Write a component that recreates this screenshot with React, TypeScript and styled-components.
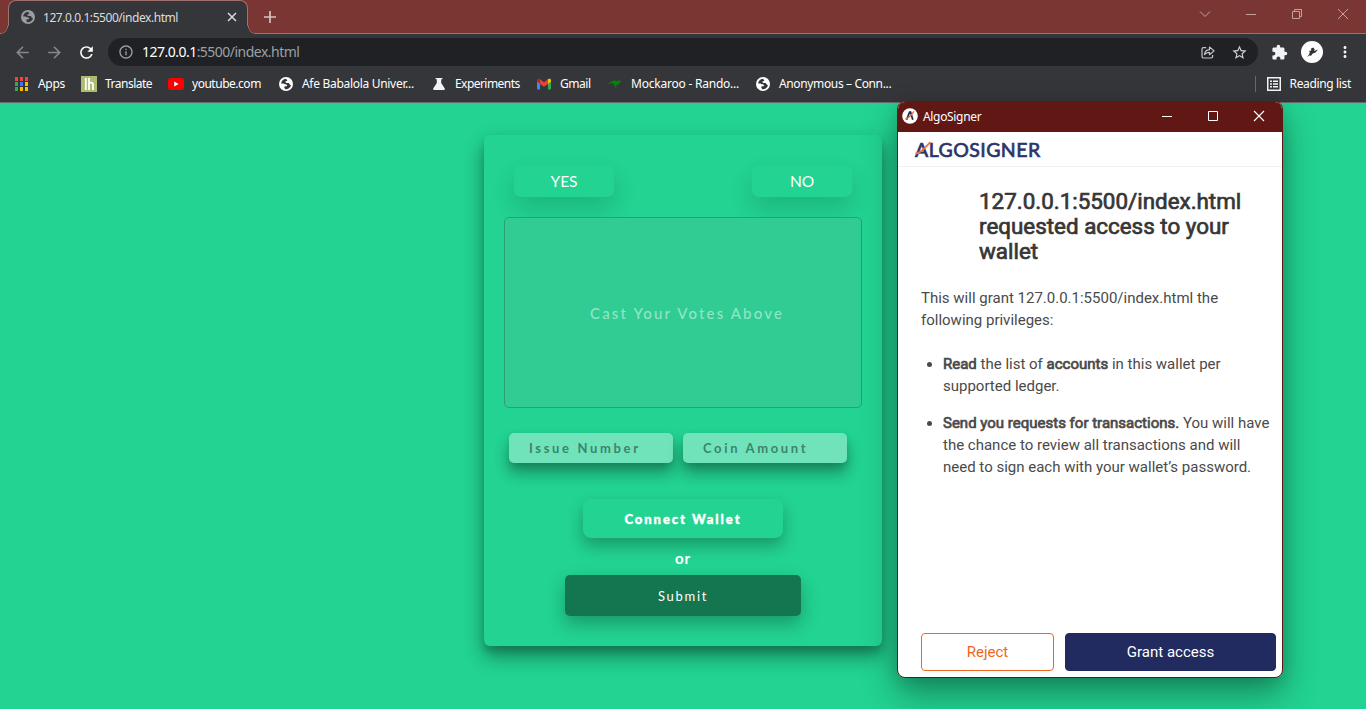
import React from "react";
import styled, { createGlobalStyle } from "styled-components";
import {
  MdArrowBack,
  MdArrowForward,
  MdRefresh,
  MdInfoOutline,
  MdStarBorder,
  MdExtension,
  MdMoreVert,
} from "react-icons/md";

const GlobalStyle = createGlobalStyle`
  *, *::before, *::after { box-sizing: border-box; }
  html, body { margin: 0; padding: 0; overflow: hidden; }
  body { background: #22d391; font-family: "Noto Sans", "Open Sans", sans-serif; }
  svg { display: block; flex: none; }
`;

const Desktop = styled.div`
  position: relative;
  width: 1366px;
  height: 709px;
  overflow: hidden;
  display: flex;
  flex-direction: column;
`;

/* ---------- Browser chrome ---------- */

const TabStrip = styled.div`
  height: 34px;
  flex: none;
  display: flex;
  align-items: flex-start;
  padding-left: 8px;
  background: #793632;
  box-shadow: inset 0 -1px 0 #9f706d;
`;

const Tab = styled.div`
  position: relative;
  width: 240px;
  height: 34px;
  display: flex;
  align-items: center;
  padding: 0 9px 1px 12px;
  background: #35363a;
  border: 1px solid #9f706d;
  border-bottom: 0;
  border-radius: 8px 8px 0 0;
  &::before,
  &::after {
    content: "";
    position: absolute;
    bottom: 0;
    width: 9px;
    height: 8px;
  }
  &::before {
    left: -9px;
    background: radial-gradient(circle at 0 0, #793632 7px, #9f706d 7.5px, #35363a 8.3px);
  }
  &::after {
    right: -9px;
    background: radial-gradient(circle at 100% 0, #793632 7px, #9f706d 7.5px, #35363a 8.3px);
  }
`;

const TabTitle = styled.span`
  flex: 1;
  margin: 0 0 0 8px;
  font-size: 12px;
  letter-spacing: -0.44px;
  color: #dcdcdd;
  white-space: nowrap;
`;

const NewTab = styled.div`
  margin: 11px 0 0 16px;
`;

const Caption = styled.div`
  margin: 7px 16px 0 auto;
  display: flex;
  gap: 32px;
`;

const Toolbar = styled.div`
  height: 35px;
  flex: none;
  display: flex;
  align-items: center;
  padding: 1px 12px 0 13px;
  background: #35363a;
`;

const NavButtons = styled.div`
  display: flex;
  align-items: center;
  gap: 13px;
  width: 95px;
`;

const Omnibox = styled.div`
  width: 1150px;
  height: 28px;
  display: flex;
  align-items: center;
  padding: 0 10px;
  border-radius: 14px;
  background: #202124;
`;

const Url = styled.span`
  flex: 1;
  margin: -1px 0 0 8px;
  font-size: 14px;
  letter-spacing: -0.52px;
  color: #9aa0a6;
  b { font-weight: 400; color: #fff; }
`;

const OmniIcons = styled.div`
  display: flex;
  align-items: center;
  gap: 16px;
`;

const ToolbarEnd = styled.div`
  flex: 1;
  display: flex;
  align-items: center;
  justify-content: space-between;
  padding-left: 13px;
`;

const BookmarkBar = styled.div`
  height: 34px;
  flex: none;
  display: flex;
  align-items: center;
  padding: 0 14px 4px;
  background: #35363a;
  border-bottom: 1px solid #68696c;
`;

const Bookmark = styled.div<{ $w: number; $gap?: number }>`
  width: ${(p) => p.$w}px;
  display: flex;
  align-items: center;
  gap: ${(p) => p.$gap ?? 8}px;
  white-space: nowrap;
`;

const BookmarkText = styled.span<{ $ls?: number }>`
  font-size: 12px;
  line-height: 18px;
  letter-spacing: ${(p) => p.$ls ?? -0.3}px;
  color: #fff;
`;

const ReadingList = styled.div`
  margin-left: auto;
  height: 16px;
  display: flex;
  align-items: center;
  gap: 9px;
  padding: 0 1px 0 11px;
  border-left: 1px solid #68696d;
  white-space: nowrap;
`;

/* ---------- Voting page ---------- */

const Page = styled.main`
  flex: 1;
  padding: 32px 0 0 484px;
  background: #22d391;
  font-family: Lato, "Liberation Sans", sans-serif;
`;

const Card = styled.section`
  width: 398px;
  height: 511px;
  display: flex;
  flex-direction: column;
  align-items: center;
  padding: 30px 20px;
  border-radius: 6px;
  background: #22d391;
  box-shadow: 0 10px 20px rgba(0, 0, 0, 0.4), 0 6px 6px rgba(0, 0, 0, 0.12);
`;

const VoteRow = styled.div`
  width: 338px;
  display: flex;
  justify-content: space-between;
`;

const VoteButton = styled.button`
  width: 100px;
  height: 32px;
  padding: 0;
  border: 0;
  border-radius: 7px;
  background: #22d391;
  box-shadow: 0 12px 24px rgba(0, 0, 0, 0.14);
  color: #fff;
  font: 400 15.5px/30px Lato, sans-serif;
`;

const Board = styled.div`
  width: 358px;
  height: 191px;
  margin-top: 20px;
  display: flex;
  align-items: center;
  justify-content: center;
  padding-left: 8px;
  border: 1px solid #2a9f73;
  border-radius: 5px;
  background: #31cc94;
  color: #8fe6c4;
  font-size: 15px;
  font-weight: 500;
  letter-spacing: 2.15px;
`;

const Fields = styled.div`
  width: 348px;
  margin-top: 25px;
  display: flex;
  gap: 10px;
`;

const Field = styled.div`
  width: 164px;
  height: 30px;
  padding-left: 20px;
  border-radius: 5px;
  background: #71e3ba;
  box-shadow: 0 10px 15px rgba(0, 0, 0, 0.32), 0 4px 6px rgba(0, 0, 0, 0.1);
  color: #3a856b;
  font-size: 13px;
  font-weight: 700;
  line-height: 31px;
  letter-spacing: 2.65px;
  white-space: nowrap;
`;

const ConnectButton = styled.button`
  width: 200px;
  height: 39px;
  margin-top: 36px;
  padding: 0;
  border: 0;
  border-radius: 8px;
  background: #22d391;
  box-shadow: 0 8px 16px rgba(0, 0, 0, 0.27);
  color: #fff;
  font: 900 13px Lato, sans-serif;
  letter-spacing: 1.95px;
  -webkit-text-stroke: 0.4px #fff;
`;

const Or = styled.div`
  height: 37px;
  line-height: 41px;
  color: #fff;
  font-size: 15px;
  font-weight: 700;
  letter-spacing: 1px;
`;

const SubmitButton = styled.button`
  width: 236px;
  height: 41px;
  padding: 0;
  border: 0;
  border-radius: 5px;
  background: #147551;
  box-shadow: 0 8px 18px rgba(0, 0, 0, 0.27);
  color: #fff;
  font: 400 13px Lato, sans-serif;
  letter-spacing: 1.7px;
`;

/* ---------- Extension window ---------- */

const Window = styled.div`
  position: absolute;
  left: 897px;
  top: 101px;
  width: 386px;
  height: 577px;
  display: flex;
  flex-direction: column;
  overflow: hidden;
  border: 1px solid #5c1816;
  border-radius: 8px;
  background: #fff;
  font-family: Roboto, sans-serif;
`;

const WindowShadow = styled.div`
  position: absolute;
  left: 897px;
  top: 103px;
  width: 386px;
  height: 575px;
  border-radius: 8px;
  box-shadow: 0 16px 34px rgba(0, 0, 0, 0.35), 0 2px 16px rgba(0, 0, 0, 0.12);
`;

const TitleBar = styled.div`
  height: 30px;
  flex: none;
  display: flex;
  align-items: center;
  padding: 0 17px 2px 4px;
  background: #611815;
  color: #fff;
  font: 12px "Noto Sans", sans-serif;
  letter-spacing: -0.33px;
`;

const TitleText = styled.span`
  flex: 1;
  margin: 1px 0 0 5px;
`;

const WindowControls = styled.div`
  display: flex;
  gap: 34px;
`;

const Brand = styled.div`
  height: 35px;
  flex: none;
  padding-left: 17px;
  border-bottom: 1px solid #edf4f4;
`;

const BrandMark = styled.div`
  position: relative;
  width: 128px;
  color: #2c3468;
  font: 400 19.5px/36px Lato, sans-serif;
  letter-spacing: 0.45px;
  -webkit-text-stroke: 0.7px #2c3468;
  white-space: nowrap;
  svg { position: absolute; left: 0; top: 9px; }
`;

const Heading = styled.h1`
  margin: 22px 0 0 81px;
  width: 280px;
  color: #363636;
  font-size: 22.4px;
  font-weight: 400;
  line-height: 25px;
  -webkit-text-stroke: 0.7px #363636;
`;

const Prose = styled.div`
  margin: 23px 0 0 23px;
  width: 352px;
  color: #4a4a4a;
  font-size: 15px;
  line-height: 22px;
  p { margin: 0; }
  ul { margin: 22px 0 0; padding-left: 22px; }
  li + li { margin-top: 15px; }
  strong { font-weight: 400; -webkit-text-stroke: 0.7px #4a4a4a; }
`;

const Actions = styled.div`
  margin-top: auto;
  display: flex;
  gap: 11px;
  padding: 0 6px 6px 23px;
`;

const Action = styled.button<{ $primary?: boolean }>`
  width: ${(p) => (p.$primary ? 211 : 133)}px;
  height: 38px;
  padding: 0;
  border: 1px solid ${(p) => (p.$primary ? "#222b60" : "#f16522")};
  border-radius: 4px;
  background: ${(p) => (p.$primary ? "#222b60" : "#fff")};
  color: ${(p) => (p.$primary ? "#fff" : "#f16522")};
  font: 400 15px Roboto, sans-serif;
`;

/* ---------- Drawings ---------- */

const Globe = ({ color, ink }: { color: string; ink: string }) => (
  <svg width="14" height="14" viewBox="0 0 14 14">
    <circle cx="7" cy="7" r="7" fill={color} />
    <path
      d="M7.2 1.8C5.6 1.9 3.4 3 2.6 4.8L2 6.6H4.6L5.6 7.2H7.2L8.2 8.4 7.6 9.2H5.8L5.2 10.8 6.4 12.3C8.6 12.6 11.2 11 12 8.6L10.8 7.4 9.8 6H7.4L6.4 5.2 6.6 4.2 8.4 4Z"
      fill={ink}
    />
  </svg>
);

const appColors = ["#f0453c", "#f0453c", "#f0453c", "#34a853", "#2f7df6", "#fbbc05", "#34a853", "#fbbc05", "#fbbc05"];

const AppsGrid = () => (
  <svg width="14" height="14" viewBox="0 0 14 14" shapeRendering="crispEdges">
    {appColors.map((c, i) => (
      <rect key={i} x={1 + (i % 3) * 5} y={Math.floor(i / 3) * 5} width="3" height="4" fill={c} />
    ))}
  </svg>
);

const TranslateIcon = () => (
  <svg width="16" height="16" viewBox="0 0 16 16">
    <rect width="16" height="16" fill="#acbd6f" />
    <path d="M4.8 2v12M8 2v12M8 7.8c1-1.8 4-1.6 4 .4V14" stroke="#fff" strokeWidth="1.8" fill="none" />
  </svg>
);

const YoutubeIcon = () => (
  <svg width="16" height="12" viewBox="0 0 16 12">
    <rect width="16" height="12" rx="3" fill="#f00" />
    <path d="M6.2 3.6v4.8L10.6 6z" fill="#fff" />
  </svg>
);

const FlaskIcon = () => (
  <svg width="14" height="14" viewBox="0 0 14 14">
    <path d="M3.6 1h6.8v1.3H9.2V6L12.8 11.6Q13.3 13 12 13H2Q.7 13 1.2 11.6L4.8 6V2.3H3.6z" fill="#f1f3f4" />
  </svg>
);

const GmailIcon = () => (
  <svg width="14" height="12" viewBox="0 0 15 12">
    <path d="M0 2v8.5Q0 12 1.2 12H3.3V5z" fill="#4285f4" />
    <path d="M15 2v8.5Q15 12 13.8 12H11.7V5z" fill="#34a853" />
    <path d="M11.7 1v5L15 3.2V2C15 .3 13 0 12.2.7z" fill="#fbbc04" />
    <path d="M0 3.2 3.3 6V1L2.7.6C1.5-.2 0 .7 0 2z" fill="#c5221f" />
    <path d="M3.3 1v5L7.5 9l4.2-3V1L7.5 4.2z" fill="#ea4335" />
  </svg>
);

const KangarooIcon = () => (
  <svg width="16" height="16" viewBox="0 0 16 16">
    <path
      d="M1 7.6C3.6 6.4 4.6 4.6 7 4.4 8.6 4.3 10 5.4 11.2 5.2L11.8 3.6 12.6 4.8 14.4 5.8 12.8 6.6 11.8 7.4 12 9.4 10.8 8.2 9.6 8.8 9 10.2 10.2 11.6 8.2 11.4 8 9.4 6 7.4C4.4 7 2.8 7.8 1 7.6z"
      fill="#078407"
    />
  </svg>
);

const ShareIcon = () => (
  <svg width="14" height="14" viewBox="0 0 14 14" fill="none" stroke="#c4c6c8" strokeWidth="1.2">
    <path d="M5.2 2.6H2.4Q1 2.6 1 4v7.6Q1 13 2.4 13h7.8q1.4 0 1.4-1.4V10" />
    <path d="M3.5 9.6C3.8 6.4 5.6 4.8 8.5 4.6V2l4.6 3.9-4.6 3.8V7.3C6.2 7.2 4.7 8 3.5 9.6z" strokeLinejoin="round" />
  </svg>
);

const AvatarIcon = () => (
  <svg width="22" height="22" viewBox="0 0 22 22">
    <circle cx="11" cy="11" r="11" fill="#fff" />
    <path
      d="M6 16 8.2 13.2 8.8 11.2 8 10 10.2 9.4 10 7.4 12.6 6.6 13.6 8.4 13.2 10 17 8.4 14.6 11.6 11.8 12.6 10 14.8 8.4 14.6z"
      fill="#33342f"
    />
  </svg>
);

const ListIcon = () => (
  <svg width="14" height="14" viewBox="0 0 14 14" fill="none" stroke="#f1f3f4">
    <rect x=".75" y=".75" width="12.5" height="12.5" strokeWidth="1.5" />
    <path d="M3 4.2h2M6 4.2h5M3 7h2M6 7h5M3 9.8h2M6 9.8h5" strokeWidth="1.6" />
  </svg>
);

type LineProps = { d: string; color: string; size?: number; sw?: number };

const Line = ({ d, color, size = 12, sw = 1 }: LineProps) => (
  <svg width={size} height={size} viewBox={`0 0 ${size} ${size}`} fill="none" stroke={color} strokeWidth={sw}>
    <path d={d} />
  </svg>
);

const AlgoIcon = () => (
  <svg width="16" height="16" viewBox="0 0 16 16">
    <circle cx="8" cy="8" r="7.8" fill="#fff" />
    <path d="M4.6 11.8 7.6 4.2h1l2.2 7.6" stroke="#1d2350" strokeWidth="1.7" fill="none" />
    <path d="M3.4 11C6.4 10.4 8.6 8.4 12 3.4" stroke="#ee6b3b" strokeWidth="1.3" fill="none" />
  </svg>
);

const dim = "#c3a19f";

export default function App() {
  return (
    <Desktop>
      <GlobalStyle />
      <TabStrip>
        <Tab>
          <Globe color="#9a9da1" ink="#35363a" />
          <TabTitle>127.0.0.1:5500/index.html</TabTitle>
          <Line d="M2 2l8 8M10 2l-8 8" color="#dcdcdd" sw={1.5} />
        </Tab>
        <NewTab>
          <Line d="M6 0v12M0 6h12" color="#d7c3c2" sw={1.7} />
        </NewTab>
        <Caption>
          <Line d="M2 4.5l5 5 5-5" color={dim} size={14} />
          <Line d="M2 7.5h10" color={dim} size={14} />
          <Line d="M2.5 4.5h7v7h-7zM4.5 4V2.5h7v7H10" color={dim} size={14} />
          <Line d="M2 2l10 10M12 2L2 12" color={dim} size={14} />
        </Caption>
      </TabStrip>
      <Toolbar>
        <NavButtons>
          <MdArrowBack size={19} color="#86888b" />
          <MdArrowForward size={19} color="#86888b" />
          <MdRefresh size={19} color="#fff" />
        </NavButtons>
        <Omnibox>
          <MdInfoOutline size={16} color="#9aa0a6" />
          <Url>
            <b>127.0.0.1</b>:5500/index.html
          </Url>
          <OmniIcons>
            <ShareIcon />
            <MdStarBorder size={17} color="#d0d2d4" />
          </OmniIcons>
        </Omnibox>
        <ToolbarEnd>
          <MdExtension size={17} color="#f1f3f4" />
          <AvatarIcon />
          <MdMoreVert size={18} color="#f1f3f4" />
        </ToolbarEnd>
      </Toolbar>
      <BookmarkBar>
        <Bookmark $w={67} $gap={10}>
          <AppsGrid />
          <BookmarkText>Apps</BookmarkText>
        </Bookmark>
        <Bookmark $w={87}>
          <TranslateIcon />
          <BookmarkText $ls={-0.5}>Translate</BookmarkText>
        </Bookmark>
        <Bookmark $w={111}>
          <YoutubeIcon />
          <BookmarkText $ls={-0.48}>youtube.com</BookmarkText>
        </Bookmark>
        <Bookmark $w={153} $gap={9}>
          <Globe color="#fff" ink="#35363a" />
          <BookmarkText>Afe Babalola Univer...</BookmarkText>
        </Bookmark>
        <Bookmark $w={105} $gap={9}>
          <FlaskIcon />
          <BookmarkText $ls={-0.55}>Experiments</BookmarkText>
        </Bookmark>
        <Bookmark $w={70} $gap={9}>
          <GmailIcon />
          <BookmarkText $ls={-0.45}>Gmail</BookmarkText>
        </Bookmark>
        <Bookmark $w={149}>
          <KangarooIcon />
          <BookmarkText $ls={-0.22}>Mockaroo - Rando...</BookmarkText>
        </Bookmark>
        <Bookmark $w={137} $gap={9}>
          <Globe color="#fff" ink="#35363a" />
          <BookmarkText $ls={-0.36}>Anonymous – Conn...</BookmarkText>
        </Bookmark>
        <ReadingList>
          <ListIcon />
          <BookmarkText $ls={-0.35}>Reading list</BookmarkText>
        </ReadingList>
      </BookmarkBar>

      <Page>
        <Card>
          <VoteRow>
            <VoteButton>YES</VoteButton>
            <VoteButton>NO</VoteButton>
          </VoteRow>
          <Board>Cast Your Votes Above</Board>
          <Fields>
            <Field>Issue Number</Field>
            <Field>Coin Amount</Field>
          </Fields>
          <ConnectButton>Connect Wallet</ConnectButton>
          <Or>or</Or>
          <SubmitButton>Submit</SubmitButton>
        </Card>
      </Page>

      <WindowShadow />
      <Window>
        <TitleBar>
          <AlgoIcon />
          <TitleText>AlgoSigner</TitleText>
          <WindowControls>
            <Line d="M1 6.5h10" color="#fff" />
            <Line d="M1.5 1.5h9v9h-9z" color="#fff" />
            <Line d="M1 1l10 10M11 1L1 11" color="#fff" sw={1.1} />
          </WindowControls>
        </TitleBar>
        <Brand>
          <BrandMark>
            ALGOSIGNER
            <svg width="18" height="18" viewBox="0 0 18 18">
              <path d="M.5 12.5C5.5 12 9 8 15.5 1" stroke="#ee7343" strokeWidth="1.8" fill="none" />
            </svg>
          </BrandMark>
        </Brand>
        <Heading>127.0.0.1:5500/index.html requested access to your wallet</Heading>
        <Prose>
          <p>This will grant 127.0.0.1:5500/index.html the following privileges:</p>
          <ul>
            <li>
              <strong>Read</strong> the list of <strong>accounts</strong> in this wallet per supported ledger.
            </li>
            <li>
              <strong>Send you requests for transactions.</strong> You will have the chance to review all transactions
              and will need to sign each with your wallet’s password.
            </li>
          </ul>
        </Prose>
        <Actions>
          <Action>Reject</Action>
          <Action $primary>Grant access</Action>
        </Actions>
      </Window>
    </Desktop>
  );
}
